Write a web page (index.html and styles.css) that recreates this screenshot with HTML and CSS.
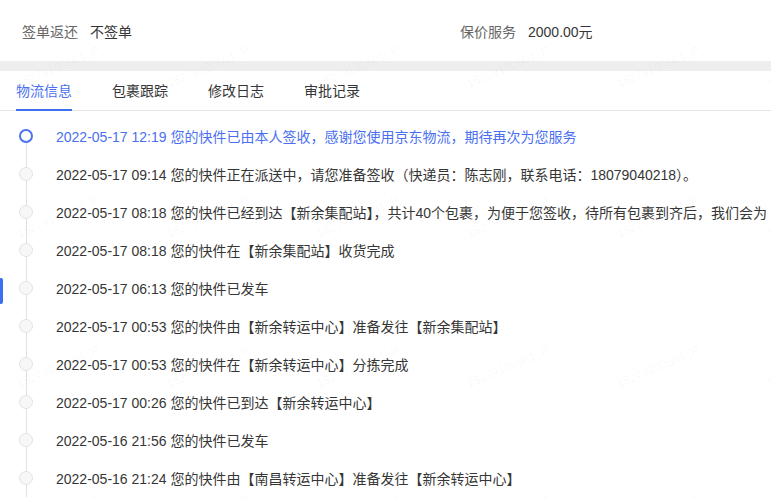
FILE: index.html
```html
<!DOCTYPE html>
<html>

<head>
    <meta charset="utf-8">
    <link rel="stylesheet" href="styles.css">
</head>

<body>
    <div class="info">
        <div class="info-item"><span class="label">签单返还</span><span class="value">不签单</span></div>
        <div class="info-item"><span class="label">保价服务</span><span class="value">2000.00元</span></div>
    </div>

    <div class="band"></div>

    <div class="tabs">
        <div class="tab active">物流信息</div>
        <div class="tab">包裹跟踪</div>
        <div class="tab">修改日志</div>
        <div class="tab">审批记录</div>
    </div>

    <ul class="timeline">
        <li class="step current"><span class="dot"></span><span class="text">2022-05-17 12:19 您的快件已由本人签收，感谢您使用京东物流，期待再次为您服务</span></li>
        <li class="step"><span class="dot"></span><span class="text">2022-05-17 09:14 您的快件正在派送中，请您准备签收（快递员：陈志刚，联系电话：18079040218）。</span></li>
        <li class="step"><span class="dot"></span><span class="text">2022-05-17 08:18 您的快件已经到达【新余集配站】，共计40个包裹，为便于您签收，待所有包裹到齐后，我们会为</span></li>
        <li class="step"><span class="dot"></span><span class="text">2022-05-17 08:18 您的快件在【新余集配站】收货完成</span></li>
        <li class="step"><span class="dot"></span><span class="text">2022-05-17 06:13 您的快件已发车</span></li>
        <li class="step"><span class="dot"></span><span class="text">2022-05-17 00:53 您的快件由【新余转运中心】准备发往【新余集配站】</span></li>
        <li class="step"><span class="dot"></span><span class="text">2022-05-17 00:53 您的快件在【新余转运中心】分拣完成</span></li>
        <li class="step"><span class="dot"></span><span class="text">2022-05-17 00:26 您的快件已到达【新余转运中心】</span></li>
        <li class="step"><span class="dot"></span><span class="text">2022-05-16 21:56 您的快件已发车</span></li>
        <li class="step"><span class="dot"></span><span class="text">2022-05-16 21:24 您的快件由【南昌转运中心】准备发往【新余转运中心】</span></li>
    </ul>

    <div class="side-mark"></div>

    <div class="watermark">
        <div class="wm-grid">
            <span>15279190501_P</span><span>15279190501_P</span><span>15279190501_P</span><span>15279190501_P</span><span>15279190501_P</span><span>15279190501_P</span>
            <span>15279190501_P</span><span>15279190501_P</span><span>15279190501_P</span><span>15279190501_P</span><span>15279190501_P</span><span>15279190501_P</span>
            <span>15279190501_P</span><span>15279190501_P</span><span>15279190501_P</span><span>15279190501_P</span><span>15279190501_P</span><span>15279190501_P</span>
            <span>15279190501_P</span><span>15279190501_P</span><span>15279190501_P</span><span>15279190501_P</span><span>15279190501_P</span><span>15279190501_P</span>
        </div>
    </div>
</body>

</html>
```

FILE: styles.css
```css
html, body {
    margin: 0;
    height: 100%;
    overflow: hidden;
}

body {
    position: relative;
    background: #fff;
    font-family: "Liberation Sans", Arial, "Noto Sans CJK SC", sans-serif;
    font-size: 14px;
    color: #363636;
}

.info {
    display: grid;
    grid-template-columns: 438px 1fr;
    height: 61px;
    align-items: center;
    padding-left: 22px;
}

.info .label {
    color: #666;
    margin-right: 12px;
}

.info .value {
    color: #363636;
}

.band {
    height: 10px;
    background: #eeeeee;
}

.tabs {
    display: flex;
    gap: 40px;
    height: 39px;
    padding-left: 16px;
    border-bottom: 1px solid #e3e3e3;
}

.tab {
    height: 40px;
    line-height: 40px;
    box-sizing: border-box;
    border-bottom: 2px solid transparent;
    white-space: nowrap;
}

.tab.active {
    color: #4a70f0;
    border-bottom-color: #3d6ff0;
}

.timeline {
    list-style: none;
    margin: 0;
    padding: 6px 0 0 0;
}

.step {
    position: relative;
    display: flex;
    align-items: center;
    height: 38px;
    padding-left: 19px;
    white-space: nowrap;
}

.step::before {
    content: "";
    position: absolute;
    left: 25.5px;
    top: 0;
    bottom: 0;
    width: 1px;
    background: #e2e2e2;
}

.step:first-child::before {
    top: 50%;
}

.dot {
    position: relative;
    width: 14px;
    height: 14px;
    box-sizing: border-box;
    border-radius: 50%;
    border: 1.5px solid #e4e4e4;
    background: #f7f7f7;
    flex: none;
    margin-right: 23px;
}

.step.current .dot {
    border: 2px solid #4a73f0;
    background: #fff;
}

.step.current .text {
    color: #4a70f0;
}

.side-mark {
    position: absolute;
    left: 0;
    top: 278px;
    width: 3px;
    height: 26px;
    background: #3d6ff0;
    border-radius: 0 2px 2px 0;
}

.watermark {
    position: absolute;
    inset: 0;
    overflow: hidden;
    pointer-events: none;
}

.wm-grid {
    display: grid;
    grid-template-columns: repeat(6, 150px);
    grid-auto-rows: 150px;
    margin: -8px 0 0 -17px;
}

.wm-grid span {
    display: flex;
    align-items: center;
    justify-content: center;
    transform: rotate(-23deg);
    font-family: "Liberation Sans", Arial, sans-serif;
    font-size: 12px;
    color: rgba(0, 0, 0, 0.04);
}
```
